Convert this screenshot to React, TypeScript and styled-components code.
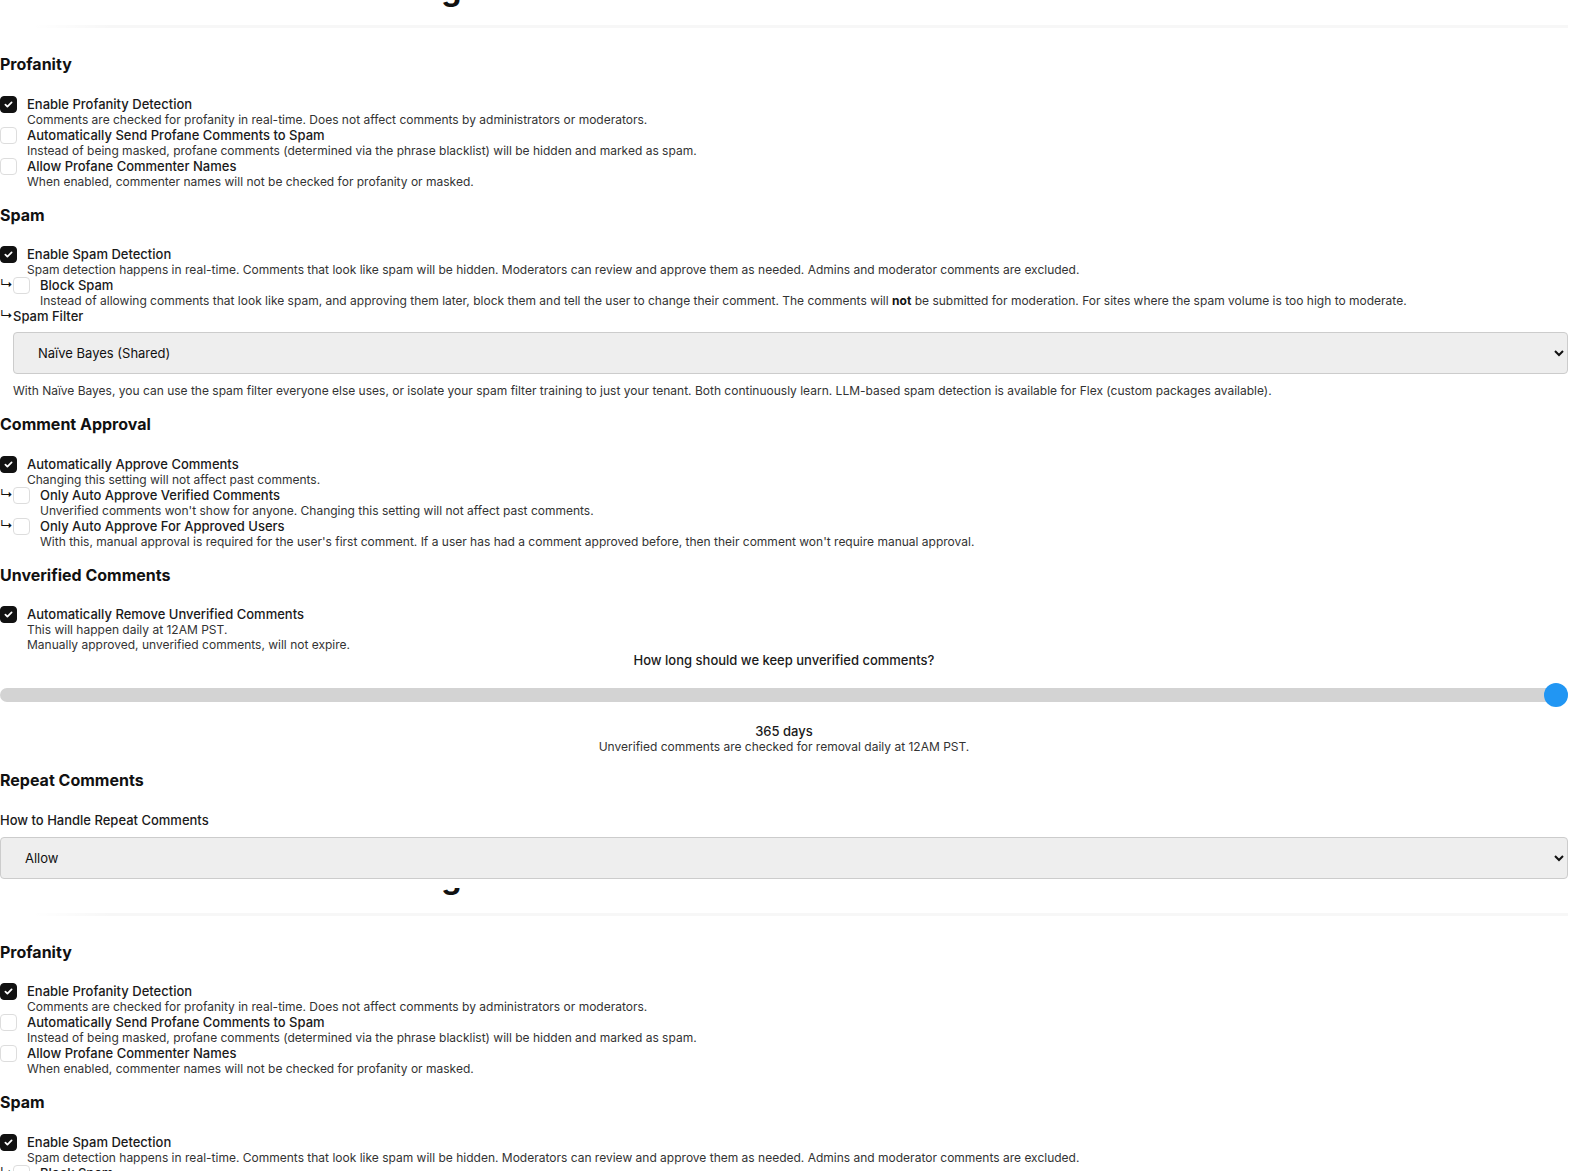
import React from "react";
import styled, { createGlobalStyle } from "styled-components";

const GlobalStyle = createGlobalStyle`
  body {
    margin: 0;
    background: #fff;
    color: #111;
    font-family: Inter, "Noto Sans", sans-serif;
  }
`;

const Page = styled.div`
  padding-right: 2px;
`;

const Copy = styled.div`
  padding-bottom: 9px;
`;

const Header = styled.div`
  position: relative;
  height: 28px;
  overflow: hidden;

  &::after {
    content: "";
    position: absolute;
    left: 0;
    right: 0;
    bottom: 0;
    height: 3px;
    background: linear-gradient(to right, rgba(0, 0, 0, 0) 2%, rgba(0, 0, 0, 0.03) 7%);
  }
`;

const Title = styled.h1`
  margin: -27px 0 0;
  padding-left: 163px;
  font-size: 32px;
  line-height: 32px;
  font-weight: 700;
  color: #111;
`;

const Content = styled.div`
  padding-top: 10px;
`;

const SectionTitle = styled.h3`
  margin: 16px 0 21.5px;
  font-size: 16px;
  line-height: 20px;
  font-weight: 700;
  color: #111;
`;

const Option = styled.label`
  display: flex;
  gap: 10px;
  align-items: flex-start;
`;

const Box = styled.span<{ $checked?: boolean }>`
  flex: none;
  width: 17px;
  height: 17px;
  box-sizing: border-box;
  border-radius: 4px;
  border: 1px solid ${(p) => (p.$checked ? "#111" : "#ddd")};
  background: ${(p) => (p.$checked ? "#111" : "#fff")};
  display: flex;
  align-items: center;
  justify-content: center;
`;

const TextCol = styled.div`
  display: flex;
  flex-direction: column;
`;

const Label = styled.div`
  font-size: 13px;
  line-height: 16px;
  font-weight: 500;
  color: #1a1a1a;
`;

const Desc = styled.div`
  font-size: 12px;
  line-height: 15px;
  color: #333;

  b {
    font-weight: 700;
    color: #111;
  }
`;

const Nested = styled.div`
  display: flex;
  align-items: flex-start;
`;

const Arrow = styled.span`
  flex: none;
  width: 13px;
  font-size: 13px;
  line-height: 14px;
  color: #111;
`;

const Indent = styled.div`
  padding-left: 13px;
`;

const Select = styled.select<{ $gap: number }>`
  display: block;
  width: 100%;
  height: 42px;
  margin-top: ${(p) => p.$gap}px;
  padding: 0 20px;
  box-sizing: border-box;
  border: 1px solid #ccc;
  border-radius: 4px;
  background-color: #eee;
  font-family: Inter, "Noto Sans", sans-serif;
  font-size: 13px;
  color: #111;
`;

const Hint = styled(Desc)`
  margin-top: 9px;
`;

const Centered = styled.div<{ $weight?: number }>`
  text-align: center;
  font-size: ${(p) => (p.$weight ? 13 : 12)}px;
  line-height: ${(p) => (p.$weight ? 16 : 15)}px;
  font-weight: ${(p) => p.$weight ?? 400};
  color: ${(p) => (p.$weight ? "#1a1a1a" : "#333")};
`;

const Range = styled.input`
  display: block;
  width: 100%;
  height: 14px;
  margin: 20px 0 21px;
  -webkit-appearance: none;
  appearance: none;
  background: #d3d3d3;
  border-radius: 7px;
  outline: none;

  &::-webkit-slider-thumb {
    -webkit-appearance: none;
    appearance: none;
    width: 24px;
    height: 24px;
    border-radius: 50%;
    background: #2196f3;
    border: none;
  }
`;

type Item = {
  label: string;
  desc: React.ReactNode[];
  checked?: boolean;
  nested?: boolean;
};

function Check() {
  return (
    <svg width="11" height="11" viewBox="0 0 12 12">
      <path d="M2.6 6.2l2.2 2.2 4.6-4.8" fill="none" stroke="#fff" strokeWidth="1.9" strokeLinecap="round" strokeLinejoin="round" />
    </svg>
  );
}

function CheckOption({ item }: { item: Item }) {
  const row = (
    <Option>
      <Box $checked={item.checked}>{item.checked && <Check />}</Box>
      <TextCol>
        <Label>{item.label}</Label>
        {item.desc.map((d, i) => (
          <Desc key={i}>{d}</Desc>
        ))}
      </TextCol>
    </Option>
  );
  if (!item.nested) return row;
  return (
    <Nested>
      <Arrow>↳</Arrow>
      {row}
    </Nested>
  );
}

const profanity: Item[] = [
  {
    label: "Enable Profanity Detection",
    desc: ["Comments are checked for profanity in real-time. Does not affect comments by administrators or moderators."],
    checked: true,
  },
  {
    label: "Automatically Send Profane Comments to Spam",
    desc: ["Instead of being masked, profane comments (determined via the phrase blacklist) will be hidden and marked as spam."],
  },
  {
    label: "Allow Profane Commenter Names",
    desc: ["When enabled, commenter names will not be checked for profanity or masked."],
  },
];

const spam: Item[] = [
  {
    label: "Enable Spam Detection",
    desc: [
      "Spam detection happens in real-time. Comments that look like spam will be hidden. Moderators can review and approve them as needed. Admins and moderator comments are excluded.",
    ],
    checked: true,
  },
  {
    label: "Block Spam",
    desc: [
      <>
        Instead of allowing comments that look like spam, and approving them later, block them and tell the user to change their comment. The comments will <b>not</b> be submitted for moderation. For sites where the spam volume is too high to moderate.
      </>,
    ],
    nested: true,
  },
];

const approval: Item[] = [
  {
    label: "Automatically Approve Comments",
    desc: ["Changing this setting will not affect past comments."],
    checked: true,
  },
  {
    label: "Only Auto Approve Verified Comments",
    desc: ["Unverified comments won't show for anyone. Changing this setting will not affect past comments."],
    nested: true,
  },
  {
    label: "Only Auto Approve For Approved Users",
    desc: [
      "With this, manual approval is required for the user's first comment. If a user has had a comment approved before, then their comment won't require manual approval.",
    ],
    nested: true,
  },
];

const unverified: Item = {
  label: "Automatically Remove Unverified Comments",
  desc: ["This will happen daily at 12AM PST.", "Manually approved, unverified comments, will not expire."],
  checked: true,
};

function Settings() {
  return (
    <Copy>
      <Header>
        <Title>Moderation Settings</Title>
      </Header>
      <Content>
        <SectionTitle>Profanity</SectionTitle>
        {profanity.map((item) => (
          <CheckOption key={item.label} item={item} />
        ))}

        <SectionTitle>Spam</SectionTitle>
        {spam.map((item) => (
          <CheckOption key={item.label} item={item} />
        ))}
        <Nested>
          <Arrow>↳</Arrow>
          <Label>Spam Filter</Label>
        </Nested>
        <Indent>
          <Select $gap={8} defaultValue="shared">
            <option value="shared">Naïve Bayes (Shared)</option>
            <option value="isolated">Naïve Bayes (Isolated)</option>
          </Select>
          <Hint>
            With Naïve Bayes, you can use the spam filter everyone else uses, or isolate your spam filter training to just your tenant. Both continuously learn. LLM-based spam detection is available for Flex (custom packages available).
          </Hint>
        </Indent>

        <SectionTitle>Comment Approval</SectionTitle>
        {approval.map((item) => (
          <CheckOption key={item.label} item={item} />
        ))}

        <SectionTitle>Unverified Comments</SectionTitle>
        <CheckOption item={unverified} />
        <Centered $weight={500}>How long should we keep unverified comments?</Centered>
        <Range type="range" min={1} max={365} defaultValue={365} />
        <Centered $weight={500}>365 days</Centered>
        <Centered>Unverified comments are checked for removal daily at 12AM PST.</Centered>

        <SectionTitle>Repeat Comments</SectionTitle>
        <Label>How to Handle Repeat Comments</Label>
        <Select $gap={9} defaultValue="allow">
          <option value="allow">Allow</option>
          <option value="deny">Deny</option>
        </Select>
      </Content>
    </Copy>
  );
}

export default function App() {
  return (
    <Page>
      <GlobalStyle />
      <Settings />
      <Settings />
    </Page>
  );
}
